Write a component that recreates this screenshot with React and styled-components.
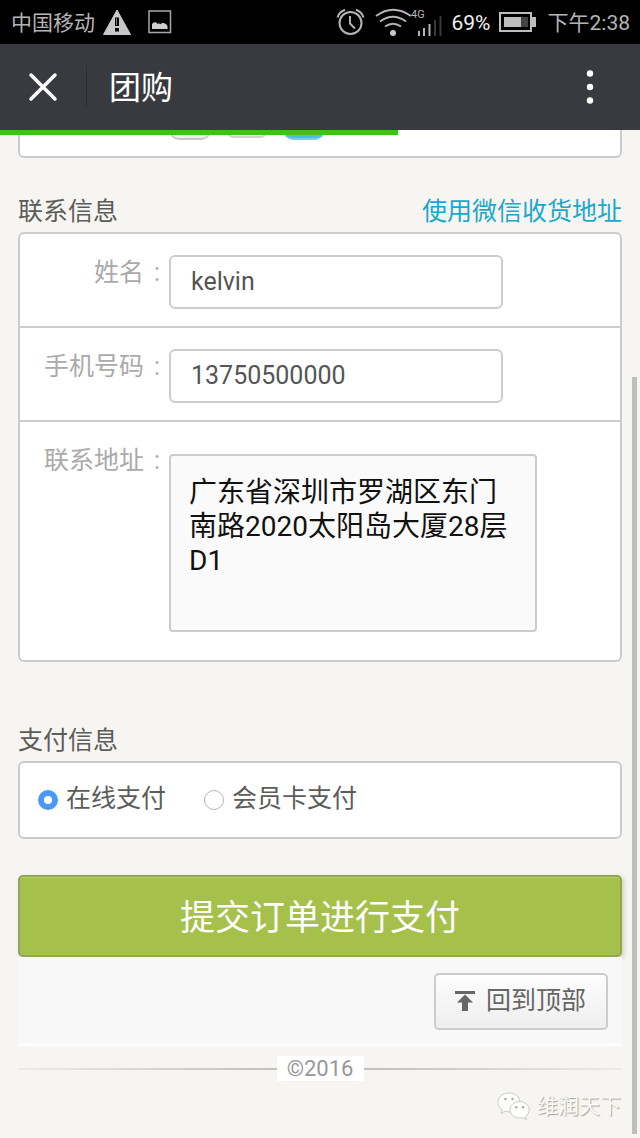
import React, { useState } from 'react';
import styled, { createGlobalStyle } from 'styled-components';

const sans = 'Roboto, "Noto Sans CJK SC", sans-serif';

const GlobalStyle = createGlobalStyle`
  * { box-sizing: border-box; }
  body {
    margin: 0;
    background: #f6f5f1;
    font-family: ${sans};
    color: #5c5c5a;
  }
  button, input, textarea { font-family: inherit; margin: 0; }
`;

const Page = styled.div`
  position: relative;
  min-height: 100vh;
  display: flex;
  flex-direction: column;
`;

const StatusBar = styled.div`
  display: flex;
  align-items: center;
  justify-content: space-between;
  height: 44px;
  padding: 0 10px 0 11px;
  background: #000;
  color: #b4b4b4;
  font-size: 21px;
  line-height: 44px;
`;

const StatusGroup = styled.div`
  display: flex;
  align-items: center;
`;

const StatusText = styled.span`
  margin: 2px ${p => p.$after || 0}px 0 0;
  font-size: ${p => p.$size || 21}px;
  color: ${p => p.$color || 'inherit'};
`;

const StatusIcon = styled.svg`
  display: block;
  flex: none;
  margin-right: ${p => p.$after || 0}px;
`;

const TitleBar = styled.header`
  position: relative;
  display: flex;
  align-items: center;
  height: 86px;
  padding: 0 30px 0 22px;
  background: #393a3f;
  color: #fff;
`;

const IconButton = styled.button`
  display: flex;
  align-items: center;
  justify-content: center;
  height: 42px;
  width: ${p => p.$width}px;
  padding: 0;
  border: 0;
  background: none;
  color: inherit;
`;

const Divider = styled.span`
  width: 1px;
  height: 42px;
  margin: 0 22px;
  background: #2c2d31;
`;

const PageTitle = styled.h1`
  flex: 1;
  margin: 0;
  padding-top: 2px;
  font-size: 32px;
  line-height: 42px;
  font-weight: 400;
`;

const LoadProgress = styled.div`
  position: absolute;
  z-index: 1;
  left: 0;
  top: 100%;
  width: 62.2%;
  height: 5px;
  background: #46bc1e;
`;

const Content = styled.main`
  display: flex;
  flex-direction: column;
  padding: 0 18px;
`;

const Card = styled.div`
  border: 2px solid #ccc;
  border-radius: 6px;
  background: #fff;
`;

const QuantityCard = styled(Card)`
  display: flex;
  align-items: flex-start;
  gap: 15px;
  height: 28px;
  padding-left: 149px;
  border-top: 0;
  border-top-left-radius: 0;
  border-top-right-radius: 0;
`;

const QuantityTab = styled.span`
  width: 42px;
  height: ${p => p.$height}px;
  border-radius: 0 0 10px 10px;
  border: solid ${p => p.$edge};
  border-width: 0 1px 2px;
  background: ${p => p.$fill};
`;

const SectionHead = styled.div`
  display: flex;
  justify-content: space-between;
  margin-top: ${p => p.$top}px;
  font-size: 25px;
  line-height: 36px;
`;

const SectionTitle = styled.h2`
  margin: 0;
  font-size: inherit;
  font-weight: 400;
`;

const AddressLink = styled.a`
  color: #1aa8cd;
  text-decoration: none;
`;

const FormCard = styled(Card)`
  margin-top: 2px;
`;

const FieldRow = styled.div`
  display: flex;
  align-items: flex-start;
  padding: 21px 83px 17px 0;
  & + & { border-top: 2px solid #ccc; }
`;

const AddressRow = styled(FieldRow)`
  padding-bottom: 28px;
`;

const FieldLabel = styled.label`
  flex: none;
  display: flex;
  justify-content: flex-end;
  width: 149px;
  padding-right: 9px;
  font-size: 25px;
  line-height: 36px;
  color: #aaa;
`;

const Colon = styled.span`
  width: 16px;
  text-align: right;
`;

const TextField = styled.input`
  flex: 0 1 334px;
  min-width: 0;
  height: 54px;
  padding: 0 20px 2px;
  border: 2px solid #ccc;
  border-radius: 6px;
  background: #fff;
  color: #555;
  font-size: 25px;
  outline: 0;
`;

const AddressField = styled.textarea`
  flex: 0 0 368px;
  height: 178px;
  margin-top: 11px;
  padding: 20px 18px 16px;
  border: 2px solid #ccc;
  border-radius: 4px;
  background: #fafafa;
  color: #111;
  font-size: 28px;
  line-height: 34px;
  resize: none;
  overflow: hidden;
  outline: 0;
`;

const PayCard = styled(FormCard)`
  display: flex;
  gap: 38px;
  height: 78px;
  padding: 18px;
`;

const PayOption = styled.label`
  display: flex;
  align-items: flex-start;
  gap: 8px;
  font-size: 25px;
  line-height: 36px;
`;

const Radio = styled.input`
  appearance: none;
  width: 20px;
  height: 20px;
  margin: 9px 0 0;
  border: 1px solid #b5b5b5;
  border-radius: 50%;
  background: #fff;
  &:checked { border: 6px solid #4a98f7; }
`;

const SubmitButton = styled.button`
  height: 82px;
  margin-top: 36px;
  padding: 6px 0 0;
  border: 2px solid #91a653;
  border-radius: 5px;
  background: #a5c14b;
  box-shadow: inset 0 1px 0 #b9d06d, 2px 2px 5px rgba(0, 0, 0, 0.16);
  color: #fff;
  font-size: 35px;
  line-height: 48px;
`;

const TopPanel = styled.div`
  display: flex;
  justify-content: flex-end;
  padding: 16px 14px 14px;
  border-bottom: 2px solid #fff;
  background: #f8f8f8;
`;

const TopButton = styled.button`
  display: flex;
  align-items: center;
  gap: 11px;
  height: 57px;
  padding: 0 20px 1px 19px;
  border: 2px solid #ccc;
  border-radius: 5px;
  background: linear-gradient(#fdfdfd, #eee);
  color: #666;
  font-size: 25px;
  line-height: 36px;
`;

const Copyright = styled.div`
  display: flex;
  align-items: center;
  margin-top: 10px;
  color: #999;
  font-size: 22px;
  line-height: 25px;
`;

const Rule = styled.span`
  flex: 1;
  height: 2px;
  background: linear-gradient(to ${p => p.$fade}, #bfbfbb, #ecebe7);
`;

const Year = styled.span`
  width: 87px;
  background: #fff;
  text-align: center;
`;

const Account = styled.div`
  display: flex;
  align-items: center;
  justify-content: flex-end;
  gap: 6px;
  margin-top: 10px;
  padding-right: 1px;
  color: #fafaf8;
  font-size: 21px;
  line-height: 30px;
  text-shadow: 1px 1px 1px #a2a29e;
`;

const ScrollThumb = styled.div`
  position: absolute;
  z-index: 2;
  top: 377px;
  bottom: 4px;
  right: 3px;
  width: 5px;
  background: #bebebb;
`;

function WarningIcon() {
  return (
    <StatusIcon $after={16} width="30" height="27" viewBox="0 0 30 27">
      <path d="M15 1 L28.500 25.500 H1.500 Z" fill="#c8c8c8" stroke="#c8c8c8" strokeWidth="1" strokeLinejoin="round" />
      <path d="M13 8.500h4v8.500h-4zM13 19h4v3.500h-4z" fill="#000" />
      <path d="M14.500 9v7" stroke="#777" strokeWidth="1" />
    </StatusIcon>
  );
}

function PictureIcon() {
  return (
    <StatusIcon width="24" height="24" viewBox="0 0 24 24">
      <rect x="1" y="1" width="21.500" height="21.500" fill="none" stroke="#a8a8a8" strokeWidth="1.500" />
      <path d="M4 19V14.500C5 12 8 11.500 9.500 14c1.500-.8 2.500-.5 3 .3C14 12 18 13 19.500 16v3z" fill="#d0d0d0" />
    </StatusIcon>
  );
}

function AlarmIcon() {
  return (
    <StatusIcon $after={10} width="29" height="28" viewBox="0 0 29 28" fill="none" stroke="#b4b4b4" strokeWidth="2">
      <circle cx="14.500" cy="15" r="11" />
      <path d="M14 8v7.500l5 5" />
      <path d="M1.500 9.500Q3 4 9 1.800M27.500 9.500Q26 4 20 1.800" />
    </StatusIcon>
  );
}

function SignalIcon() {
  return (
    <StatusIcon $after={10} width="67" height="28" viewBox="0 0 67 28">
      <g fill="none" stroke="#b4b4b4" strokeWidth="2">
        <path d="M1 8Q18 -4.500 36 8" />
        <path d="M5 13.500Q18 4 31 13.500" />
        <path d="M10 18.500Q18 13 26 18.500" />
      </g>
      <circle cx="18" cy="25" r="3" fill="#c8c8c8" />
      <text x="36" y="10" fontSize="11" fill="#b4b4b4">4G</text>
      <path d="M44 23v5M49 20v8M54.500 16v12" stroke="#b4b4b4" strokeWidth="2" />
      <path d="M60 12v16M65.500 8v20" stroke="#383838" strokeWidth="2" />
    </StatusIcon>
  );
}

function BatteryIcon() {
  return (
    <StatusIcon $after={12} width="37" height="20" viewBox="0 0 37 20">
      <rect x="1" y="1" width="31" height="18" fill="none" stroke="#bdbdbd" strokeWidth="2" />
      <rect x="33" y="5" width="4" height="10" fill="#bdbdbd" />
      <rect x="5" y="5" width="17" height="10" fill="#bdbdbd" />
      <rect x="22" y="5" width="7" height="10" fill="#444" />
    </StatusIcon>
  );
}

function WeChatIcon() {
  return (
    <svg width="34" height="29" viewBox="0 0 34 29">
      <g stroke="#c8c8c3" strokeWidth="1" fill="#fefefd">
        <path d="M12 1C5.500 1 1 5 1 10.300c0 3.200 1.600 5.600 4.300 7.500L4.200 21.500l4-2.200c1.400.4 2.500.5 3.800.5 6.500 0 11-4.300 11-9.500S18.500 1 12 1z" />
        <path d="M22.500 9.500c-5.400 0-9.500 3.700-9.500 8.300s4.100 8.300 9.500 8.300c1.200 0 2.200-.1 3.300-.5l3.700 2-1-3.200c2.400-1.600 3.700-3.900 3.700-6.600 0-4.600-4.300-8.300-9.700-8.300z" />
      </g>
      <g fill="#a5a5a0">
        <circle cx="8.500" cy="7" r="1.200" />
        <circle cx="15.500" cy="7" r="1.200" />
        <circle cx="19.300" cy="15.200" r="1.200" />
        <circle cx="26" cy="15.200" r="1.200" />
      </g>
    </svg>
  );
}

export default function App() {
  const [name, setName] = useState('kelvin');
  const [phone, setPhone] = useState('13750500000');
  const [address, setAddress] = useState('广东省深圳市罗湖区东门南路2020太阳岛大厦28层D1');
  const [pay, setPay] = useState('online');

  return (
    <Page>
      <GlobalStyle />
      <StatusBar>
        <StatusGroup>
          <StatusText $after={7}>中国移动</StatusText>
          <WarningIcon />
          <PictureIcon />
        </StatusGroup>
        <StatusGroup>
          <AlarmIcon />
          <SignalIcon />
          <StatusText $after={8} $size={21} $color="#f0f0f0">69%</StatusText>
          <BatteryIcon />
          <StatusText>下午2:38</StatusText>
        </StatusGroup>
      </StatusBar>

      <TitleBar>
        <IconButton $width={42} aria-label="关闭">
          <svg width="30" height="30" viewBox="0 0 30 30" stroke="#fff" strokeWidth="3.500" strokeLinecap="round">
            <path d="M3 3l24 24M27 3L3 27" />
          </svg>
        </IconButton>
        <Divider />
        <PageTitle>团购</PageTitle>
        <IconButton $width={40} aria-label="更多">
          <svg width="8" height="36" viewBox="0 0 8 36" fill="#fff">
            <circle cx="4" cy="4.500" r="3.200" />
            <circle cx="4" cy="18" r="3.200" />
            <circle cx="4" cy="31.500" r="3.200" />
          </svg>
        </IconButton>
        <LoadProgress />
      </TitleBar>

      <Content>
        <QuantityCard>
          <QuantityTab $height={10} $fill="#eee" $edge="#c6c6cc" />
          <QuantityTab $height={8} $fill="#fff" $edge="#d0d0d0" />
          <QuantityTab $height={10} $fill="#45bfe0" $edge="#7fcbdf" />
        </QuantityCard>

        <SectionHead $top={36}>
          <SectionTitle>联系信息</SectionTitle>
          <AddressLink href="#address">使用微信收货地址</AddressLink>
        </SectionHead>
        <FormCard>
          <FieldRow>
            <FieldLabel htmlFor="name">姓名<Colon>:</Colon></FieldLabel>
            <TextField id="name" value={name} onChange={e => setName(e.target.value)} />
          </FieldRow>
          <FieldRow>
            <FieldLabel htmlFor="phone">手机号码<Colon>:</Colon></FieldLabel>
            <TextField id="phone" type="tel" value={phone} onChange={e => setPhone(e.target.value)} />
          </FieldRow>
          <AddressRow>
            <FieldLabel htmlFor="address">联系地址<Colon>:</Colon></FieldLabel>
            <AddressField id="address" spellCheck="false" value={address} onChange={e => setAddress(e.target.value)} />
          </AddressRow>
        </FormCard>

        <SectionHead $top={61}>
          <SectionTitle>支付信息</SectionTitle>
        </SectionHead>
        <PayCard>
          <PayOption>
            <Radio type="radio" name="pay" checked={pay === 'online'} onChange={() => setPay('online')} />
            在线支付
          </PayOption>
          <PayOption>
            <Radio type="radio" name="pay" checked={pay === 'card'} onChange={() => setPay('card')} />
            会员卡支付
          </PayOption>
        </PayCard>

        <SubmitButton type="submit">提交订单进行支付</SubmitButton>

        <TopPanel>
          <TopButton type="button">
            <svg width="20" height="20" viewBox="0 0 20 20" fill="#666">
              <path d="M0 0h20v3H0zM10 3.500l8 8h-5V20H7v-8.500H2z" />
            </svg>
            回到顶部
          </TopButton>
        </TopPanel>

        <Copyright>
          <Rule $fade="left" />
          <Year>©2016</Year>
          <Rule $fade="right" />
        </Copyright>
        <Account>
          <WeChatIcon />
          维润天下
        </Account>
      </Content>
      <ScrollThumb />
    </Page>
  );
}
